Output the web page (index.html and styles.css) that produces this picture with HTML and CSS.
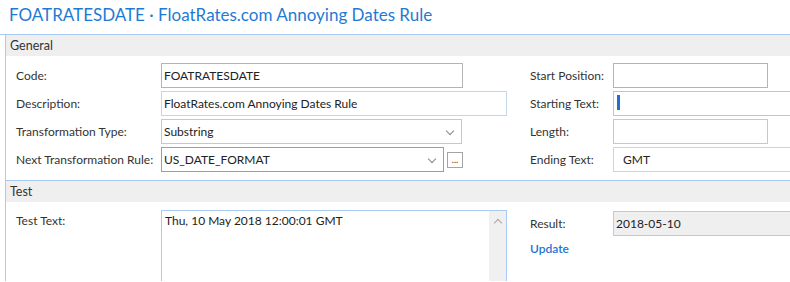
FILE: index.html
```html
<!DOCTYPE html>
<html lang="en">

<head>
    <meta charset="UTF-8">
    <title>FOATRATESDATE</title>
    <link rel="stylesheet" href="styles.css">
</head>

<body>

    <h1 class="title">FOATRATESDATE · FloatRates.com Annoying Dates Rule</h1>

    <section class="group">
        <div class="group-head">General</div>
        <div class="form">
            <label class="lbl">Code:</label>
            <div class="cell"><div class="box w302 grey">FOATRATESDATE</div></div>
            <label class="lbl">Start Position:</label>
            <div class="cell"><div class="box w155 grey"></div></div>

            <label class="lbl">Description:</label>
            <div class="cell"><div class="box w346 soft">FloatRates.com Annoying Dates Rule</div></div>
            <label class="lbl">Starting Text:</label>
            <div class="cell"><div class="box wide lilac"><span class="caret"></span></div></div>

            <label class="lbl">Transformation Type:</label>
            <div class="cell"><div class="box w301 blue sel">Substring<span class="chev"></span></div></div>
            <label class="lbl">Length:</label>
            <div class="cell"><div class="box w155 blue"></div></div>

            <label class="lbl">Next Transformation Rule:</label>
            <div class="cell">
                <div class="box w283 dark sel">US_DATE_FORMAT<span class="chev"></span></div>
                <button class="dots" type="button">...</button>
            </div>
            <label class="lbl">Ending Text:</label>
            <div class="cell"><div class="box wide soft pad">GMT</div></div>
        </div>
    </section>

    <section class="group last">
        <div class="group-head">Test</div>
        <div class="test">
            <label class="lbl top">Test Text:</label>
            <div class="area">
                <div class="area-text">Thu, 10 May 2018 12:00:01 GMT</div>
                <div class="scroll"><span class="up"></span></div>
            </div>
            <div class="result">
                <div class="res-row">
                    <label class="lbl res-lbl">Result:</label>
                    <div class="box wide grey ro">2018-05-10</div>
                </div>
                <a class="update" href="#">Update</a>
            </div>
        </div>
    </section>

</body>

</html>
```

FILE: styles.css
```css
body {
    margin: 0;
    padding: 0;
    background: #fff;
    font-family: Lato, "Open Sans", sans-serif;
    font-size: 12px;
    color: #333;
    overflow: hidden;
}

.title {
    margin: 0;
    height: 34px;
    padding-left: 9px;
    font-size: 17px;
    font-weight: normal;
    line-height: 29px;
    color: #1f7ad3;
    border-bottom: 1px solid #a9cbf2;
    white-space: nowrap;
}

.group {
    margin-left: 5px;
    border-left: 1px solid #a9cbf2;
    border-bottom: 1px solid #a9cbf2;
}

.group.last {
    border-bottom: none;
}

.group-head {
    height: 21px;
    line-height: 21px;
    padding-left: 4px;
    background: #efefef;
    font-size: 12.5px;
    color: #333;
}

.form {
    display: grid;
    grid-template-columns: 145px 369px 83px 1fr;
    row-gap: 3px;
    padding: 7px 0 8px 10px;
    align-items: center;
}

.lbl {
    white-space: nowrap;
}

.cell {
    display: flex;
    align-items: center;
    gap: 3px;
    min-width: 0;
}

.box {
    box-sizing: border-box;
    height: 25px;
    line-height: 23px;
    padding-left: 2px;
    border: 1px solid #adadad;
    background: #fff;
    color: #222;
    white-space: nowrap;
    position: relative;
    flex: none;
}

.w302 { width: 302px; }
.w346 { width: 346px; }
.w301 { width: 301px; }
.w283 { width: 283px; }
.w155 { width: 155px; }
.wide { width: 200px; }

.grey { border-color: #b4b4b4; }
.soft { border-color: #c4d6ea; }
.blue { border-color: #b0cdee; }
.dark { border-color: #9e9e9e; }
.lilac { border-color: #c4bfe0; }
.pad { padding-left: 9px; }

.caret {
    position: absolute;
    left: 3px;
    top: 3px;
    width: 3px;
    height: 15px;
    background: #1f6fd6;
}

.chev {
    position: absolute;
    right: 8px;
    top: 8px;
    width: 5px;
    height: 5px;
    border-right: 1px solid #888;
    border-bottom: 1px solid #888;
    transform: rotate(45deg);
}

.dots {
    box-sizing: border-box;
    width: 16px;
    height: 16px;
    padding: 0;
    border: 1px solid #a5a5a5;
    background: #fff;
    font-family: inherit;
    font-size: 9px;
    line-height: 8px;
    color: #333;
}

.test {
    display: grid;
    grid-template-columns: 145px 369px 1fr;
    padding: 8px 0 0 10px;
    height: 71px;
    overflow: hidden;
}

.lbl.top {
    padding-top: 3px;
}

.area {
    box-sizing: border-box;
    width: 346px;
    height: 90px;
    border: 1px solid #a9cbf2;
    display: flex;
}

.area-text {
    flex: 1;
    padding: 2px 0 0 3px;
    color: #222;
}

.scroll {
    width: 17px;
    background: #f0f0f0;
    position: relative;
}

.up {
    position: absolute;
    left: 6px;
    top: 9px;
    width: 5px;
    height: 5px;
    border-left: 1px solid #a6a6a6;
    border-top: 1px solid #a6a6a6;
    transform: rotate(45deg);
}

.result {
    display: flex;
    flex-direction: column;
}

.res-row {
    display: flex;
    align-items: center;
    padding-top: 1px;
}

.res-lbl {
    width: 83px;
}

.ro {
    background: #efefef;
    border-color: #c8c8c8;
}

.update {
    margin-top: 5px;
    color: #1f74d0;
    text-decoration: none;
    font-size: 12px;
    font-weight: 600;
}
```
